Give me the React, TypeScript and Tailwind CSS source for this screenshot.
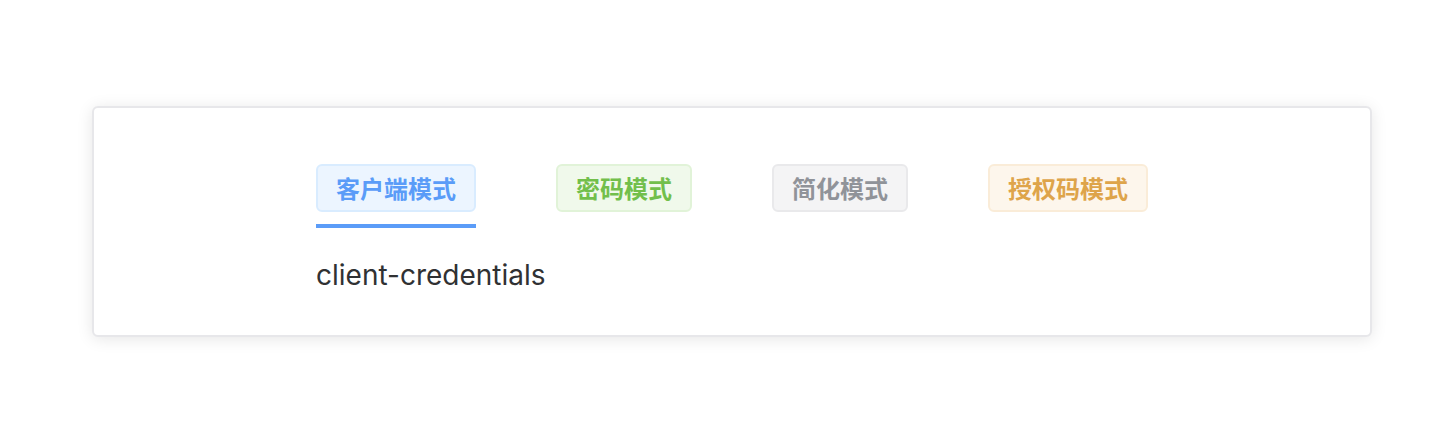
import React from "react";

const tabs = [
  { label: "客户端模式", cls: "bg-[#ecf5ff] border-[#d9ecff] text-[#5a9cf8]", active: true },
  { label: "密码模式", cls: "bg-[#f0f9eb] border-[#e1f3d8] text-[#72bf4b]", active: false },
  { label: "简化模式", cls: "bg-[#f4f4f5] border-[#e9e9eb] text-[#909399]", active: false },
  { label: "授权码模式", cls: "bg-[#fdf6ec] border-[#faecd8] text-[#dea44a]", active: false },
];

export default function App() {
  return (
    <div className="w-[1456px] h-[428px] bg-white pt-[106px] pl-[92px]" style={{ fontFamily: "Inter, 'Noto Sans CJK SC', sans-serif" }}>
      <div className="w-[1280px] h-[231px] bg-white border-2 border-[#e7e7ea] rounded-[6px] shadow-[0_2px_16px_rgba(0,0,0,0.1)] pt-[56px] pl-[222px]">
        <div className="flex gap-[80px]">
          {tabs.map((t) => (
            <div key={t.label} className="flex flex-col">
              <div
                className={`h-[48px] px-[18px] border-2 rounded-[6px] flex items-center justify-center text-[24px] font-semibold leading-none ${t.cls}`}
                style={{ fontFamily: "'Noto Sans CJK SC', sans-serif" }}
              >
                {t.label}
              </div>
              <div className={`mt-[12px] h-[4px] ${t.active ? "bg-[#5b9cf8]" : "bg-transparent"}`} />
            </div>
          ))}
        </div>
        <div className="mt-[27px] text-[28px] leading-[40px] text-[#303133]">client-credentials</div>
      </div>
    </div>
  );
}
